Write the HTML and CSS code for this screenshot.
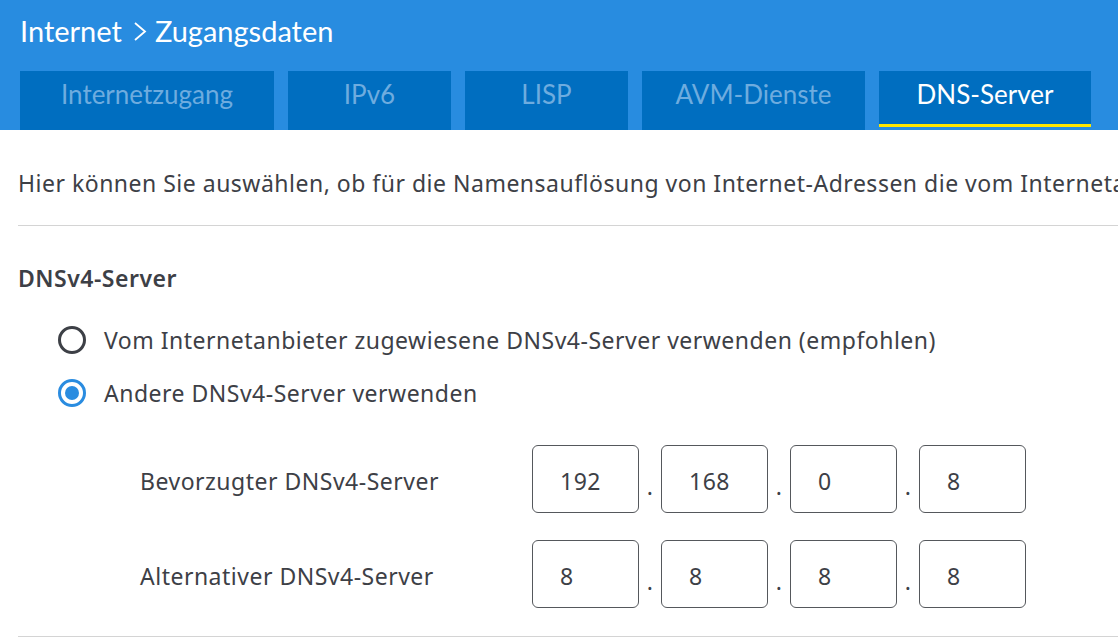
FILE: index.html
```html
<!DOCTYPE html>
<html lang="de">
<head>
<meta charset="utf-8">
<title>Internet &gt; Zugangsdaten</title>
<link rel="stylesheet" href="styles.css">
</head>
<body>
<header class="header">
  <h1 class="title">
    <span>Internet</span>
    <svg class="chev" width="14" height="19" viewBox="0 0 14 19"><polyline points="2,1 12,9.5 2,18" fill="none" stroke="#fff" stroke-width="1.8"/></svg>
    <span>Zugangsdaten</span>
  </h1>
  <nav class="tabs">
    <a class="tab tab-internet">Internetzugang</a>
    <a class="tab tab-ipv6">IPv6</a>
    <a class="tab tab-lisp">LISP</a>
    <a class="tab tab-avm">AVM-Dienste</a>
    <a class="tab tab-dns active">DNS-Server</a>
  </nav>
</header>
<main class="content">
  <p class="intro">Hier können Sie auswählen, ob für die Namensauflösung von Internet-Adressen die vom Internetanbieter zugewiesenen DNS-Server verwendet werden sollen.</p>
  <div class="sep"></div>
  <h2 class="heading">DNSv4-Server</h2>
  <div class="radios">
    <label class="radio-row"><span class="radio"></span><span>Vom Internetanbieter zugewiesene DNSv4-Server verwenden (empfohlen)</span></label>
    <label class="radio-row"><span class="radio checked"></span><span>Andere DNSv4-Server verwenden</span></label>
  </div>
  <div class="ip-rows">
    <div class="ip-row">
      <span class="ip-label">Bevorzugter DNSv4-Server</span>
      <div class="ip-fields">
        <input class="ip" type="text" value="192"><span class="dot">.</span>
        <input class="ip" type="text" value="168"><span class="dot">.</span>
        <input class="ip" type="text" value="0"><span class="dot">.</span>
        <input class="ip" type="text" value="8">
      </div>
    </div>
    <div class="ip-row">
      <span class="ip-label">Alternativer DNSv4-Server</span>
      <div class="ip-fields">
        <input class="ip" type="text" value="8"><span class="dot">.</span>
        <input class="ip" type="text" value="8"><span class="dot">.</span>
        <input class="ip" type="text" value="8"><span class="dot">.</span>
        <input class="ip" type="text" value="8">
      </div>
    </div>
  </div>
  <div class="sep bottom"></div>
</main>
</body>
</html>
```
FILE: styles.css
```css
html, body {
  margin: 0;
  padding: 0;
  background: #fff;
  overflow: hidden;
}
body {
  font-family: "Noto Sans", "Liberation Sans", sans-serif;
  color: #3d4046;
  width: 1118px;
}
.header {
  background: #288ce0;
  height: 130px;
  box-sizing: border-box;
  padding-left: 20px;
  display: flex;
  flex-direction: column;
  font-family: Lato, "Liberation Sans", sans-serif;
}
.title {
  margin: 0;
  height: 71px;
  box-sizing: border-box;
  padding-top: 13px;
  font-size: 29px;
  line-height: 36px;
  font-weight: 400;
  color: #fff;
  display: flex;
  align-items: flex-start;
  white-space: nowrap;
}
.chev {
  margin: 9px 8px 0 11px;
}
.tabs {
  display: flex;
  gap: 14px;
  height: 59px;
  align-items: flex-start;
}
.tab {
  background: #006ec0;
  color: #6eacdf;
  font-size: 26px;
  line-height: 47px;
  padding-bottom: 12px;
  box-sizing: border-box;
  text-align: center;
  white-space: nowrap;
}
.tab-internet { width: 254px; }
.tab-ipv6 { width: 163px; }
.tab-lisp { width: 163px; }
.tab-avm { width: 223px; }
.tab-dns { width: 212px; }
.tab.active {
  color: #fff;
  padding-bottom: 6px;
  border-bottom: 3px solid #ffe600;
}
.content {
  padding-left: 18px;
  font-size: 23px;
  letter-spacing: 0.5px;
}
.intro {
  margin: 38px 0 0;
  line-height: 30px;
  white-space: nowrap;
  overflow: hidden;
}
.sep {
  border-top: 1px solid #d4d4d4;
  margin-top: 27px;
}
.heading {
  margin: 37px 0 0;
  font-size: 23px;
  line-height: 30px;
  font-weight: 600;
}
.radios {
  margin-top: 20px;
  padding-left: 40px;
}
.radio-row {
  display: flex;
  align-items: center;
  gap: 18px;
  height: 53px;
}
.radio {
  width: 28px;
  height: 28px;
  box-sizing: border-box;
  border: 3px solid #3d4046;
  border-radius: 50%;
  display: flex;
  align-items: center;
  justify-content: center;
}
.radio.checked {
  border-color: #2a8ce0;
}
.radio.checked::after {
  content: "";
  width: 14px;
  height: 14px;
  border-radius: 50%;
  background: #2a8ce0;
}
.ip-rows {
  margin-top: 26px;
  display: flex;
  flex-direction: column;
  gap: 27px;
}
.ip-row {
  display: flex;
  align-items: center;
  height: 68px;
  padding-left: 122px;
}
.ip-label {
  width: 392px;
  line-height: 30px;
  padding-top: 4px;
}
.ip-fields {
  display: flex;
  align-items: center;
}
.ip {
  width: 107px;
  height: 68px;
  box-sizing: border-box;
  border: 1px solid #55585c;
  border-radius: 6px;
  padding: 4px 0 0 27px;
  font-family: "Noto Sans", "Liberation Sans", sans-serif;
  font-size: 23px;
  letter-spacing: 0.5px;
  color: #3d4046;
  background: #fff;
  outline: none;
}
.dot {
  width: 22px;
  text-align: center;
  padding-top: 14px;
}
.sep.bottom {
  margin-top: 28px;
}
```
